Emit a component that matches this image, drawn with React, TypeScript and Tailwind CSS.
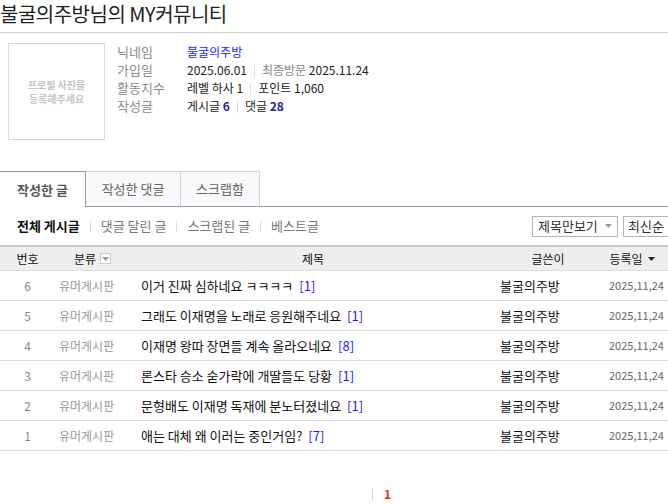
import React from "react";

const rows = [
  { no: 6, title: "이거 진짜 심하네요 ㅋㅋㅋㅋ", c: 1 },
  { no: 5, title: "그래도 이재명을 노래로 응원해주네요", c: 1 },
  { no: 4, title: "이재명 왕따 장면들 계속 올라오네요", c: 8 },
  { no: 3, title: "론스타 승소 숟가락에 개딸들도 당황", c: 1 },
  { no: 2, title: "문형배도 이재명 독재에 분노터졌네요", c: 1 },
  { no: 1, title: "애는 대체 왜 이러는 중인거임?", c: 7 },
];

function Caret({ className = "" }: { className?: string }) {
  return (
    <svg width="7" height="4" viewBox="0 0 7 4" className={className}>
      <path d="M0 0h7L3.5 4z" fill="currentColor" />
    </svg>
  );
}

function Sep() {
  return <span className="mx-[10px] inline-block h-[11px] w-px bg-[#dcdcdc]" />;
}

function InfoSep() {
  return <span className="mx-[7px] inline-block h-[11px] w-px bg-[#dcdcdc] align-middle" />;
}

export default function App() {
  const info: [string, React.ReactNode][] = [
    ["닉네임", <span className="text-[#1a1aff]">불굴의주방</span>],
    [
      "가입일",
      <span>
        2025.06.01
        <InfoSep />
        <span className="text-[#888]">최종방문</span> 2025.11.24
      </span>,
    ],
    [
      "활동지수",
      <span>
        레벨 하사 1
        <InfoSep />
        포인트 1,060
      </span>,
    ],
    [
      "작성글",
      <span>
        게시글 <b className="text-[#1f1fa6]">6</b>
        <InfoSep />
        댓글 <b className="text-[#1f1fa6]">28</b>
      </span>,
    ],
  ];
  return (
    <div
      className="w-[668px] h-[504px] overflow-hidden bg-white text-[12px] text-[#222]"
      style={{ fontFamily: '"Noto Sans CJK KR", "Noto Sans", sans-serif' }}
    >
      {/* Title */}
      <div className="h-[33px] border-b border-[#cfcfdc]">
        <h1 className="text-[20px] leading-[28px] text-[#222] tracking-[-0.5px] whitespace-nowrap">
          불굴의주방님의 MY커뮤니티
        </h1>
      </div>

      {/* Profile */}
      <div className="flex pl-[8px] pt-[10px]">
        <div className="w-[97px] h-[97px] border border-[#dadada] flex items-center justify-center text-center text-[10px] leading-[14px] font-bold text-[#c4c4c4]">
          프로필 사진을
          <br />
          등록해주세요
        </div>
        <div className="ml-[12px] flex flex-col">
          {info.map(([k, v], i) => (
            <div key={i} className="flex h-[18px] items-center leading-[18px] whitespace-nowrap">
              <span className="w-[70px] text-[13px] text-[#8c8c8c]">{k}</span>
              <span>{v}</span>
            </div>
          ))}
        </div>
      </div>

      {/* Tabs */}
      <div className="mt-[31px] flex h-[36px] items-stretch">
        <div className="w-[86px] border-t border-r border-[#9a9aa6] bg-white flex items-center justify-center font-bold text-[13px] text-[#555]">
          작성한 글
        </div>
        <div className="w-[95px] border-t border-r border-b border-t-[#cfcfd6] border-r-[#cfcfd6] border-b-[#9a9aa6] bg-[#f8f9fb] flex items-center justify-center text-[13px] text-[#666]">
          작성한 댓글
        </div>
        <div className="w-[79px] border-t border-r border-b border-t-[#cfcfd6] border-r-[#cfcfd6] border-b-[#9a9aa6] bg-[#f8f9fb] flex items-center justify-center text-[13px] text-[#666]">
          스크랩함
        </div>
        <div className="flex-1 border-b border-[#9a9aa6]" />
      </div>

      {/* Sub nav */}
      <div className="flex h-[38px] items-center pl-[17px]">
        <span className="font-bold text-[13px] text-[#111]">전체 게시글</span>
        <Sep />
        <span className="text-[13px] text-[#777]">댓글 달린 글</span>
        <Sep />
        <span className="text-[13px] text-[#777]">스크랩된 글</span>
        <Sep />
        <span className="text-[13px] text-[#777]">베스트글</span>
        <div className="ml-auto flex gap-[5px] -mr-[10px]">
          <div className="flex h-[21px] w-[86px] items-center border border-[#b4b4b4] pl-[5px] text-[13px] text-[#333]">
            제목만보기
            <Caret className="ml-[7px] text-[#999]" />
          </div>
          <div className="flex h-[21px] w-[55px] items-center border border-[#b4b4b4] pl-[4px] text-[13px] text-[#333]">
            최신순
          </div>
        </div>
      </div>

      {/* Table */}
      <div className="w-[668px]">
        <div className="flex h-[26px] items-center border-t-2 border-[#c8c8c8] border-b border-b-[#dedede] bg-[#eeeeee] text-[12px] text-[#111]">
          <div className="w-[55px] text-center">번호</div>
          <div className="w-[75px] flex items-center justify-center">
            분류
            <span className="ml-[4px] inline-flex h-[11px] w-[11px] items-center justify-center border border-[#c8c8c8] bg-white text-[#999]">
              <Caret />
            </span>
          </div>
          <div className="w-[366px] text-center">제목</div>
          <div className="w-[104px] text-center">글쓴이</div>
          <div className="w-[68px] flex items-center justify-center pr-[4px]">
            등록일
            <Caret className="ml-[5px] text-[#222]" />
          </div>
        </div>
        {rows.map((r) => (
          <div
            key={r.no}
            className="flex h-[30px] items-center border-b border-[#dedede] text-[12px]"
          >
            <div className="w-[55px] text-center text-[#888]">{r.no}</div>
            <div className="w-[75px] pl-[4px] text-[#999]">유머게시판</div>
            <div className="w-[366px] pl-[11px] text-[13px] text-[#111] whitespace-nowrap">
              {r.title}
              <span className="ml-[6px] text-[#1a1aff]">[{r.c}]</span>
            </div>
            <div className="w-[104px] pl-[4px] text-[13px] text-[#111]">불굴의주방</div>
            <div className="w-[68px] pl-[9px] text-[11px] text-[#666]">2025,11,24</div>
          </div>
        ))}
      </div>

      {/* Pagination */}
      <div className="mt-[34px] flex items-center pl-[372px]">
        <span className="inline-block h-[11px] w-px bg-[#d4d4d4]" />
        <span className="ml-[11px] font-bold text-[12px] text-[#ff1a1a]">1</span>
      </div>
    </div>
  );
}
